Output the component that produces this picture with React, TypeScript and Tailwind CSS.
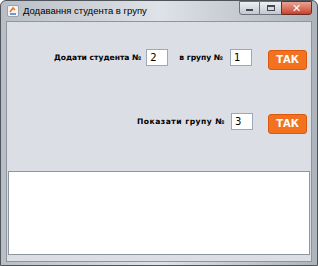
import { useState } from "react";

const label = "text-[7.6px] font-bold text-black [font-family:'DejaVu_Sans',sans-serif]";

const Field = ({ value }: { value: string }) => (
  <div className="w-[22px] h-[17px] bg-white border border-[#9aa8b8] flex items-center pl-[3px] text-[10px] text-black [font-family:'DejaVu_Sans',sans-serif]">
    {value}
  </div>
);

const OkButton = () => (
  <button className="w-[39px] h-[20px] rounded-[3px] bg-[#f4721f] border border-[#d85a10] text-white text-[10px] font-bold leading-none [font-family:'DejaVu_Sans',sans-serif]">
    ТАК
  </button>
);

export default function App() {
  const [student] = useState("2");
  const [group] = useState("1");
  const [showGroup] = useState("3");

  return (
    <div className="w-[318px] h-[266px] flex flex-col bg-gradient-to-r from-[#b9bec6] via-[#dfe2e6] to-[#aeb4bc] border border-[#4e545c] rounded-t-[6px] overflow-hidden">
      {/* title bar */}
      <div className="h-[20px] flex items-start">
        <div className="flex items-center gap-[4px] pl-[6px] pt-[4px]">
          <svg width="12" height="12" viewBox="0 0 12 12">
            <rect x="0.5" y="0.5" width="11" height="11" rx="1.5" fill="#f4f4f4" stroke="#9aa2ac" />
            <path d="M3 7 L6 3 L8 5" stroke="#e8731e" strokeWidth="1.5" fill="none" />
            <path d="M3 9 L9 9" stroke="#3f7bc8" strokeWidth="1.5" />
          </svg>
          <span className="text-[9.5px] text-black [font-family:'Liberation_Sans',sans-serif] leading-none">
            Додавання студента в групу
          </span>
        </div>
        <div className="ml-auto mr-[5px] flex h-[14px]">
          <div className="w-[21px] h-full border border-[#6b7178] rounded-bl-[3px] bg-gradient-to-b from-[#eef0f2] to-[#c3c8ce] flex items-end justify-center pb-[3px]">
            <div className="w-[7px] h-[2px] bg-[#404850]" />
          </div>
          <div className="w-[21px] h-full border-y border-[#6b7178] bg-gradient-to-b from-[#eef0f2] to-[#c3c8ce] flex items-center justify-center">
            <div className="w-[8px] h-[6px] border border-[#404850] border-t-2" />
          </div>
          <div className="w-[31px] h-full border border-[#6b2a22] rounded-br-[3px] bg-gradient-to-b from-[#e8a394] to-[#c8402c] flex items-center justify-center text-white text-[11px] font-bold leading-none [font-family:'DejaVu_Sans',sans-serif]">
            ✕
          </div>
        </div>
      </div>

      {/* content */}
      <div className="flex-1 mx-[5px] mb-[3px] bg-[#dcdee6] border border-[#8f959d] flex flex-col">
        <div className="flex items-center justify-end pr-[4px] mt-[23px]">
          <span className={label}>Додати студента №</span>
          <div className="ml-[5px]"><Field value={student} /></div>
          <span className={`${label} ml-[11px]`}>в групу №</span>
          <div className="ml-[7px]"><Field value={group} /></div>
          <div className="ml-[16px]"><OkButton /></div>
        </div>

        <div className="flex items-center justify-end pr-[4px] mt-[39px]">
          <span className={`${label} tracking-[0.5px]`}>Показати групу №</span>
          <div className="ml-[6px]"><Field value={showGroup} /></div>
          <div className="ml-[15px]"><OkButton /></div>
        </div>

        <div className="mt-[37px] mx-[1px] h-[84px] bg-white border border-[#8f959d]" />
      </div>
    </div>
  );
}
